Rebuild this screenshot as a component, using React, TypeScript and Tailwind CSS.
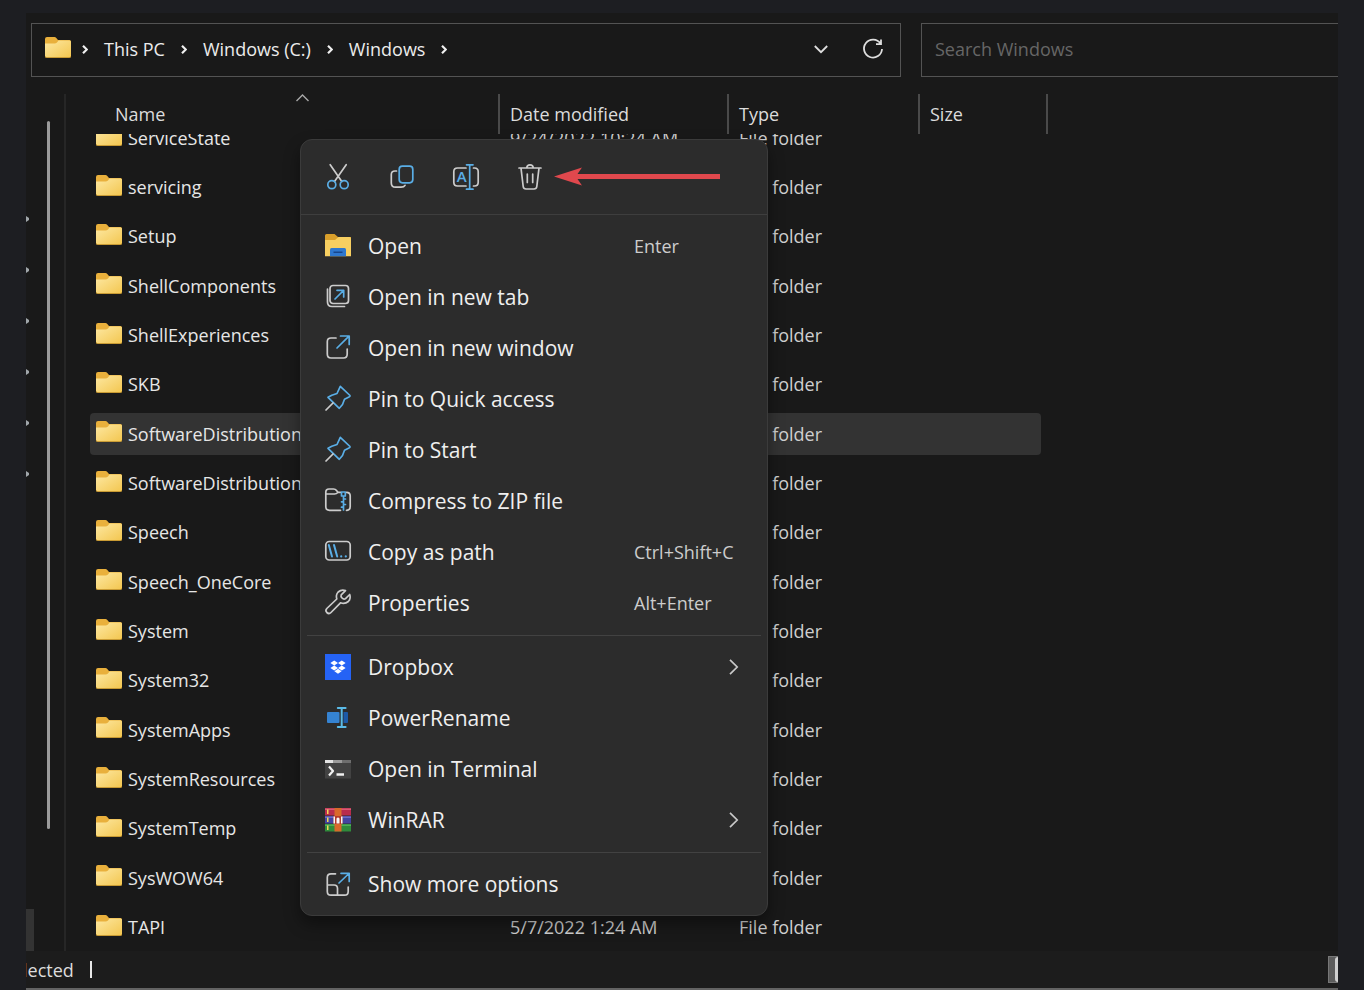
import type { ReactNode } from 'react';

const BLUE = '#5aaee6';
const GREY = '#cccccc';

const folders = [
  'ServiceState', 'servicing', 'Setup', 'ShellComponents', 'ShellExperiences', 'SKB',
  'SoftwareDistribution', 'SoftwareDistribution', 'Speech', 'Speech_OneCore', 'System',
  'System32', 'SystemApps', 'SystemResources', 'SystemTemp', 'SysWOW64', 'TAPI',
].map((name, i) => ({
  name,
  modified: i === 0 ? '9/24/2022 10:24 AM' : '5/7/2022 1:24 AM',
  selected: i === 6,
}));

function FolderIcon() {
  return (
    <svg className="mb-1 h-[21px] w-[26px] shrink-0" viewBox="0 0 26 21" aria-hidden="true">
      <defs>
        <linearGradient id="folder" x1="0" y1="0" x2="1" y2="1">
          <stop offset="0" stopColor="#fde8a2" />
          <stop offset="1" stopColor="#f3c64f" />
        </linearGradient>
      </defs>
      <path d="M0 2Q0 0 2 0H9.5Q10.5 0 11.3 1L13 3H24.5Q26 3 26 4.500V10H0Z" fill="#e9b03c" />
      <path d="M0 6.500H9.500Q11 6.500 12 5.500L13.500 3.500H24.500Q26 3.500 26 5V19Q26 20.500 24.500 20.500H1.500Q0 20.500 0 19Z" fill="url(#folder)" />
      <path d="M0 19Q0 20.500 1.500 20.500H24.500Q26 20.500 26 19" fill="none" stroke="#d9a531" strokeWidth="0.8" />
    </svg>
  );
}

function Icon({ children }: { children: ReactNode }) {
  return (
    <svg className="size-[26px] shrink-0 overflow-visible" viewBox="0 0 26 26" fill="none" stroke={GREY} strokeWidth="1.7" strokeLinecap="round" strokeLinejoin="round" aria-hidden="true">
      {children}
    </svg>
  );
}

const Chevron = () => (
  <svg className="h-[9px] w-[6px] shrink-0" viewBox="0 0 6 9" fill="none" stroke="#f0f0f0" strokeWidth="2.2" aria-hidden="true">
    <path d="M1 0.800L4.800 4.500L1 8.200" />
  </svg>
);

const tools = [
  {
    label: 'Cut',
    icon: (
      <Icon>
        <path d="M5.200 0.700L16.800 17.500M21.200 0.700L9.500 17.500" />
        <circle cx="6.800" cy="20.700" r="4" stroke={BLUE} />
        <circle cx="19.200" cy="20.700" r="4" stroke={BLUE} />
      </Icon>
    ),
  },
  {
    label: 'Copy',
    icon: (
      <Icon>
        <path d="M7.500 7H6Q2.300 7 2.300 10.500V19Q2.300 23.200 6.500 23.200H12Q15 23.200 16 21.300" />
        <rect x="10.200" y="2.200" width="13.600" height="16.600" rx="3.200" stroke={BLUE} />
      </Icon>
    ),
  },
  {
    label: 'Rename',
    icon: (
      <Icon>
        <path d="M13 4H4.500Q0.800 4 0.800 7.700V18.300Q0.800 22 4.500 22H13M20.500 4H21.500Q25.200 4 25.200 7.700V18.300Q25.200 22 21.500 22H20.500" />
        <path d="M16.700 1V25M13.500 0.800H20M13.500 25.200H20" stroke={BLUE} />
        <text x="8.600" y="18" textAnchor="middle" fontSize="15" fontWeight="600" fill={BLUE} stroke="none">A</text>
      </Icon>
    ),
  },
  {
    label: 'Delete',
    icon: (
      <Icon>
        <path d="M2 4H24M9.800 3.600Q10 0.800 13 0.800T16.200 3.600M4 4.200L6.200 22.500Q6.500 25 9 25H17Q19.500 25 19.800 22.500L22 4.200M10.300 10V18.500M15.700 10V18.500" />
      </Icon>
    ),
  },
];

const pin = (
  <Icon>
    <path d="M15.300 0.300L25 9.500Q25.300 10.500 24 11L19.500 13.200L17.500 18.500L14.300 22.300L3 11.300L6.800 9.300L12 7.500Z" stroke={BLUE} />
    <path d="M8 17L1 24" />
  </Icon>
);

type Entry = { label: string; icon: ReactNode; keys?: string; more?: boolean };

const groups: Entry[][] = [
  [
    {
      label: 'Open',
      keys: 'Enter',
      icon: (
        <Icon>
          <g stroke="none">
            <path d="M0 2.500Q0 1 1.500 1H9.500L13 4H26V10H0Z" fill="#d99f2b" />
            <path d="M0 7H10L13.500 4H24.500Q26 4 26 5.500V23.300H0Z" fill="#f7cf61" />
            <path d="M5 23.300V16.500Q5 15 6.500 15H19.500Q21 15 21 16.500V23.300Z" fill="#2e78cf" />
            <path d="M8.500 18.500H17.500V20H8.500Z" fill="#16468c" />
          </g>
        </Icon>
      ),
    },
    {
      label: 'Open in new tab',
      icon: (
        <Icon>
          <rect x="5" y="1.500" width="18.500" height="18" rx="3" />
          <path d="M2.500 5V18Q2.500 22.500 7 22.500H19.500" />
          <path d="M10 15L18.500 6.500M12 6.300H18.700V13" stroke={BLUE} />
        </Icon>
      ),
    },
    {
      label: 'Open in new window',
      icon: (
        <Icon>
          <path d="M11 3H6Q2.300 3 2.300 6.700V19Q2.300 23 6 23H18.500Q22.200 23 22.200 19V14" />
          <path d="M12 13L24 1.200M15.500 1H24.200V9.500" stroke={BLUE} />
        </Icon>
      ),
    },
    { label: 'Pin to Quick access', icon: pin },
    { label: 'Pin to Start', icon: pin },
    {
      label: 'Compress to ZIP file',
      icon: (
        <Icon>
          <path d="M15.500 22.300H4.500Q0.800 22.300 0.800 18.800V4.200Q0.800 1 4 1H8.500Q10.500 1 11.500 2.500L13 4.300H15.500M0.800 6H9.500Q11.500 6 12.800 4.500M21.500 4.300Q25.200 4.300 25.200 7.700V18.500Q25.200 22.300 21.500 22.300" />
          <path d="M16.500 4H20.300V8H16.500ZM18.500 8V22M18.500 11H20.500M16.500 13.800H18.500M18.500 16.500H20.500M16.500 19.200H18.500" stroke={BLUE} />
        </Icon>
      ),
    },
    {
      label: 'Copy as path',
      keys: 'Ctrl+Shift+C',
      icon: (
        <Icon>
          <rect x="0.800" y="2.500" width="24.400" height="18.500" rx="3.500" />
          <path d="M3.800 6L7 17.500M9 6L12.200 17.500" stroke={BLUE} strokeWidth="2" />
          <path d="M16.200 17.300V17.400M20.800 17.300V17.400" stroke={BLUE} strokeWidth="2.200" />
        </Icon>
      ),
    },
    {
      label: 'Properties',
      keys: 'Alt+Enter',
      icon: (
        <Icon>
          <path d="M20.500 0.600Q16.500 -1 13.200 2Q10.500 5 11.800 9L1.800 18.500Q0 20.500 1.800 22.500Q4 24.500 6 22.500L15.500 12.800Q20 14.500 23.300 11.500Q26.200 8.500 24.700 4.500L20.300 8.800Q18.500 9.500 17 8Q15.500 6.500 16.200 4.800Z" />
        </Icon>
      ),
    },
  ],
  [
    {
      label: 'Dropbox',
      more: true,
      icon: (
        <Icon>
          <g stroke="none">
            <rect width="26" height="26" fill="#2563f5" />
            <path d="M9.200 6.500L13 9L9.200 11.500L5.400 9ZM16.800 6.500L20.600 9L16.800 11.500L13 9ZM9.200 11.500L13 14L9.200 16.500L5.400 14ZM16.800 11.500L20.600 14L16.800 16.500L13 14ZM13 14.700L16.600 17.200L13 19.700L9.400 17.200Z" fill="#fff" />
          </g>
        </Icon>
      ),
    },
    {
      label: 'PowerRename',
      icon: (
        <Icon>
          <rect x="2" y="7" width="12.500" height="11" rx="1" fill="#3583d2" stroke="none" />
          <path d="M18.500 7H22Q23 7 23 8V17Q23 18 22 18H18.500Z" fill="#1c5aa8" stroke="none" />
          <path d="M16.700 3.500V21.500M12.800 3H20.600M12.800 22H20.600" stroke="#5bbbe8" strokeWidth="2" />
        </Icon>
      ),
    },
    {
      label: 'Open in Terminal',
      icon: (
        <Icon>
          <g stroke="none">
            <path d="M0 4H26V22.500H0Z" fill="#424242" />
            <path d="M0 4H26V7H0Z" fill="#6e6e6e" />
            <path d="M8 4H17V7H8Z" fill="#9b9b9b" />
            <path d="M0 4H8V7H0Z" fill="#e2e2e2" />
          </g>
          <path d="M4 10.500L8 15L4 19.500" stroke="#f0f0f0" strokeWidth="2.200" strokeLinecap="butt" />
          <path d="M11.500 18.500H19" stroke="#f0f0f0" strokeWidth="2.500" strokeLinecap="butt" />
        </Icon>
      ),
    },
    {
      label: 'WinRAR',
      more: true,
      icon: (
        <Icon>
          <g stroke="none">
            <path d="M0 1H26V8.500H0Z" fill="#b92c4c" />
            <path d="M0 1.500H26V3H0Z" fill="#d95a74" />
            <path d="M0 9H26V16.500H0Z" fill="#4444a0" />
            <path d="M0 9.500H26V11H0Z" fill="#6c6cc4" />
            <path d="M0 17H26V24.500H0Z" fill="#2f8b3b" />
            <path d="M0 17.500H26V19H0Z" fill="#4fae57" />
            <path d="M2 2.500H3.500V7H2ZM2 10.500H3.500V15H2ZM2 18.500H3.500V23H2Z" fill="#f0d95a" />
            <path d="M9.500 1H16.500V24.500H9.500Z" fill="#d8692a" />
            <path d="M8.500 9H17.500V17H8.500Z" fill="#b53a2a" />
            <path d="M8.500 9.500H10V16.500H8.500ZM16 9.500H17.500V16.500H16ZM11.500 11.500Q13 9.500 14.500 11.500V16.500H11.500Z" fill="#f5f5f5" />
          </g>
        </Icon>
      ),
    },
  ],
  [
    {
      label: 'Show more options',
      icon: (
        <Icon>
          <path d="M10.500 2.800H6Q2.300 2.800 2.300 6.500V20.500Q2.300 24.200 6 24.200H19.500Q23.200 24.200 23.200 20.500V16M2.300 14H9Q12.500 14 12.500 17.500V24.200" />
          <path d="M14 12L24 2.500M16 2.300H24.200V10.500" stroke={BLUE} />
        </Icon>
      ),
    },
  ],
];

function MenuRow({ entry }: { entry: Entry }) {
  return (
    <button role="menuitem" className="flex h-[51px] w-full items-center pl-6 pr-7 text-left hover:bg-white/5">
      {entry.icon}
      <span className="ml-[17px] w-[266px] whitespace-nowrap text-[21px] leading-7 text-[#efefef]">{entry.label}</span>
      {entry.keys && <span className="whitespace-nowrap text-lg text-[#cdcdcd]">{entry.keys}</span>}
      {entry.more && (
        <svg className="ml-auto h-4 w-[10px]" viewBox="0 0 10 16" fill="none" stroke="#c8c8c8" strokeWidth="1.700" aria-hidden="true">
          <path d="M1 0.800L8.200 8L1 15.200" />
        </svg>
      )}
    </button>
  );
}

function ContextMenu() {
  return (
    <div role="menu" className="absolute left-[274px] top-[126px] w-[468px] rounded-xl border border-[#3b3b3b] bg-[#2c2c2c] pb-[6px] shadow-[0_8px_16px_rgba(0,0,0,0.4)]">
      <div className="relative flex h-[75px] items-center border-b border-[#3e3e3e] pl-[5px]">
        {tools.map(t => (
          <button key={t.label} aria-label={t.label} className="flex h-12 w-16 items-center justify-center">{t.icon}</button>
        ))}
        <svg className="absolute left-[253px] top-[27px] h-5 w-[166px]" viewBox="0 0 166 20" fill="#e0484d" aria-hidden="true">
          <path d="M0 9.500L28 0.500L23.500 7H166V12H23.500L28 18.500Z" />
        </svg>
      </div>
      <div className="pt-[5px]">
        {groups.map((group, i) => (
          <div key={i}>
            {i > 0 && <hr className="mx-[6px] mb-[5px] mt-[7px] border-[#424242]" />}
            {group.map(entry => <MenuRow key={entry.label} entry={entry} />)}
          </div>
        ))}
      </div>
    </div>
  );
}

function AddressBar() {
  return (
    <div className="ml-[5px] flex h-[54px] gap-5">
      <nav className="flex min-w-0 flex-1 items-center border border-[#535353] pb-[2px] pl-[13px] pr-4 text-lg text-[#ececec]">
        <FolderIcon />
        <span className="ml-[11px] flex items-center gap-4">
          <Chevron />
          <a href="#this-pc">This PC</a>
          <Chevron />
          <a href="#c">Windows (C:)</a>
          <Chevron />
          <a href="#windows">Windows</a>
          <Chevron />
        </span>
        <button aria-label="Previous locations" className="ml-auto">
          <svg className="h-[9px] w-[14px]" viewBox="0 0 14 9" fill="none" stroke="#dedede" strokeWidth="1.800">
            <path d="M0.800 1L7 7.200L13.200 1" />
          </svg>
        </button>
        <button aria-label="Refresh" className="ml-[34px]">
          <svg className="size-[22px]" viewBox="0 0 22 22" fill="none" stroke="#dedede" strokeWidth="1.800">
            <path d="M18.500 5.600A9 9 0 1 0 20 11M19 1.500V6.200H14" />
          </svg>
        </button>
      </nav>
      <input aria-label="Search Windows" placeholder="Search Windows" className="w-[417px] min-w-0 border border-r-0 border-[#535353] bg-transparent px-[13px] pb-[2px] text-lg text-white outline-none placeholder:text-[#666]" />
    </div>
  );
}

function Sidebar() {
  return (
    <aside className="relative flex w-10 shrink-0 justify-between border-r-2 border-[#262626]">
      <div className="flex flex-col">
        <div className="flex flex-col gap-[45px] pt-[122px]">
          {[0, 1, 2, 3, 4, 5].map(i => (
            <svg key={i} className="h-[6px] w-[3px]" viewBox="0 0 3 6" fill="#a0a6aa" aria-hidden="true">
              <path d="M0 0L3 2V4L0 6Z" />
            </svg>
          ))}
        </div>
        <div className="mt-auto h-[42px] w-2 bg-[#333]" />
      </div>
      <div className="mr-[14px] mt-[27px] h-[708px] w-[3px] rounded-full bg-[#9b9b9b]" />
    </aside>
  );
}

function FileList() {
  const head = 'flex h-10 items-center border-r-2 border-[#4a4a4a] pl-[10px] text-left';
  return (
    <section className="min-w-0 flex-1 overflow-hidden">
      <div className="relative flex text-lg text-[#dcdcdc]">
        <button className="relative flex h-10 w-[434px] items-center border-r-2 border-[#4a4a4a] pl-[49px]">
          Name
          <svg className="absolute left-[230px] top-0 h-2 w-[13px]" viewBox="0 0 13 8" fill="none" stroke="#a8a8a8" strokeWidth="1.400" aria-hidden="true">
            <path d="M0.500 7L6.500 1L12.500 7" />
          </svg>
        </button>
        <button className={`${head} w-[229px]`}>Date modified</button>
        <button className={`${head} w-[191px]`}>Type</button>
        <button className={`${head} w-32`}>Size</button>
      </div>
      <div className="overflow-hidden">
        <table className="-mb-px -mt-[21px] ml-6 h-[839px] w-[951px] table-fixed border-collapse whitespace-nowrap text-lg text-[#e6e6e6]">
          <colgroup>
            <col className="w-[420px]" />
            <col className="w-[229px]" />
            <col />
          </colgroup>
          <tbody>
            {folders.map((f, i) => (
              <tr key={i}>
                <td className="p-0">
                  <div className={`flex h-[42px] items-center gap-[6px] rounded-l pl-[6px] ${f.selected ? 'bg-[#333]' : ''}`}>
                    <FolderIcon />
                    {f.name}
                  </div>
                </td>
                <td className="p-0">
                  <div className={`flex h-[42px] items-center text-[#cfcfcf] ${f.selected ? 'bg-[#333]' : ''}`}>{f.modified}</div>
                </td>
                <td className="p-0">
                  <div className={`flex h-[42px] items-center rounded-r text-[#cfcfcf] ${f.selected ? 'bg-[#333]' : ''}`}>File folder</div>
                </td>
              </tr>
            ))}
          </tbody>
        </table>
      </div>
    </section>
  );
}

export default function App() {
  return (
    <div className="flex min-h-screen flex-col bg-[#1d1e22] px-[26px] pt-[13px] font-['Open_Sans','Noto_Sans',sans-serif]">
      <main className="relative flex flex-1 flex-col overflow-hidden bg-[#191919] pt-[10px]">
        <AddressBar />
        <div className="mt-[17px] flex">
          <Sidebar />
          <FileList />
        </div>
        <footer className="flex flex-1 items-center border-b-2 border-[#636363] bg-[#1c1c1c] text-lg text-[#dcdcdc]">
          <span className="-ml-[3px]">lected</span>
          <span className="ml-4 h-[17px] w-[2px] bg-[#e8e8e8]" />
          <span className="ml-auto flex h-full w-[10px] items-center justify-end border border-r-0 border-[#777] bg-[#5c5c5c]">
            <span className="h-[25px] w-[3px] rounded-l bg-[#d0d0d0]" />
          </span>
        </footer>
        <ContextMenu />
      </main>
    </div>
  );
}
